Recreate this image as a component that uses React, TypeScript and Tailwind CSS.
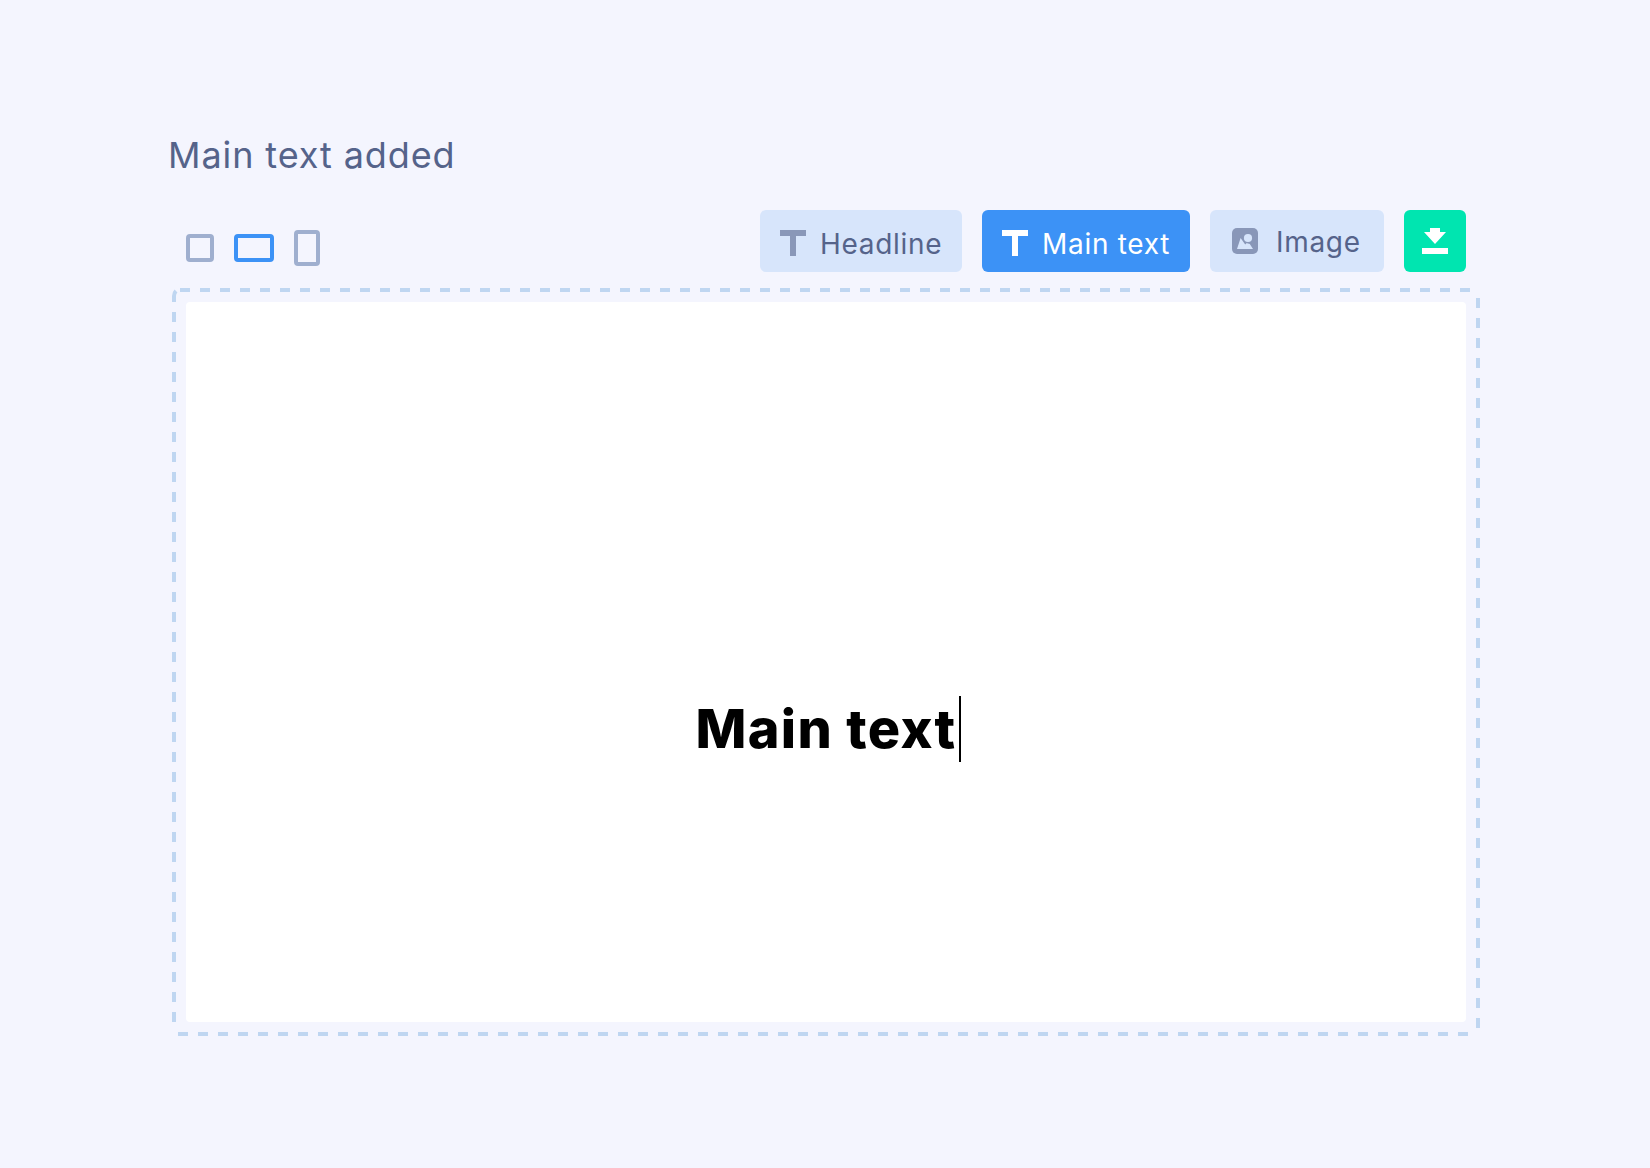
import { ReactNode, useState } from "react";

function TextIcon() {
  return (
    <svg className="block size-[26px]" viewBox="0 0 26 26" fill="currentColor" aria-hidden="true">
      <path d="M0 0h26v6H16v20h-6V6H0z" />
    </svg>
  );
}

function ImageIcon() {
  return (
    <svg className="block size-[26px]" viewBox="0 0 26 26" aria-hidden="true">
      <rect width="26" height="26" rx="5" fill="#8997b8" />
      <path d="M5 21 8.6 10l4.6 6.4 1.6-1.4 3 1L21 21z" fill="#d7e5fb" />
      <circle cx="16" cy="10" r="5.2" fill="#8997b8" />
      <circle cx="16" cy="10" r="4.1" fill="#d7e5fb" />
    </svg>
  );
}

function DownloadIcon() {
  return (
    <svg className="block size-[26px]" viewBox="0 0 26 26" fill="currentColor" aria-hidden="true">
      <path d="M8 0h10v4h6L13 16 2 4h6zM0 20h26v6H0z" />
    </svg>
  );
}

function DashedFrame() {
  return (
    <svg
      className="pointer-events-none absolute inset-0 size-full overflow-visible text-[#bfd6f1]"
      stroke="currentColor"
      strokeWidth="4"
      strokeDasharray="10 10"
      fill="none"
      aria-hidden="true"
    >
      <line x1="8" y1="2" x2="100%" y2="2" />
      <path d="M2 14V8Q2 5 4 3" strokeDasharray="none" />
      <svg x="0" y="24" width="100%" height="100%" overflow="visible">
        <line x1="2" y1="0" x2="2" y2="96%" />
      </svg>
      <svg x="100%" y="10" width="4" height="100%" overflow="visible">
        <line x1="-2" y1="0" x2="-2" y2="98%" />
      </svg>
      <svg x="0" y="100%" width="100%" height="4" overflow="visible">
        <line x1="6" y1="-2" x2="99.5%" y2="-2" />
      </svg>
    </svg>
  );
}

const formats = [
  { name: "Square", shape: "h-7 w-7" },
  { name: "Landscape", shape: "h-7 w-10" },
  { name: "Portrait", shape: "h-9 w-[26px]" },
];

function ToolButton({
  active = false,
  children,
  className,
  onClick,
}: {
  active?: boolean;
  children: ReactNode;
  className: string;
  onClick: () => void;
}) {
  return (
    <button
      type="button"
      aria-pressed={active}
      onClick={onClick}
      className={`flex h-[62px] rounded-md text-[28px] leading-8 tracking-wide ${
        active ? "bg-[#3c92f6] text-white" : "bg-[#d7e5fb] text-[#55638a]"
      } ${className}`}
    >
      {children}
    </button>
  );
}

export default function App() {
  const [format, setFormat] = useState("Landscape");
  const [tool, setTool] = useState("Main text");

  return (
    <main className="min-h-screen bg-[#f4f5fe] px-[168px] py-[132px] font-['Inter',sans-serif]">
      <h1 className="text-4xl leading-[46px] tracking-wide text-[#55638a]">Main text added</h1>

      <div className="mt-8 mr-4 ml-[18px] flex items-start justify-between">
        <div className="mt-5 flex items-center gap-5">
          {formats.map((f) => (
            <button
              key={f.name}
              type="button"
              aria-label={f.name}
              aria-pressed={format === f.name}
              onClick={() => setFormat(f.name)}
              className={`rounded-sm border-4 ${f.shape} ${
                format === f.name ? "border-[#3c92f6]" : "border-[#9fafcf]"
              }`}
            />
          ))}
        </div>

        <div className="flex gap-5">
          <ToolButton active={tool === "Headline"} onClick={() => setTool("Headline")} className="w-[202px] gap-[14px] px-5 pt-5">
            <span className={tool === "Headline" ? "text-white" : "text-[#8997b8]"}>
              <TextIcon />
            </span>
            <span className="-mt-0.5">Headline</span>
          </ToolButton>
          <ToolButton active={tool === "Main text"} onClick={() => setTool("Main text")} className="w-[208px] gap-[14px] px-5 pt-5">
            <span className={tool === "Main text" ? "text-white" : "text-[#8997b8]"}>
              <TextIcon />
            </span>
            <span className="-mt-0.5 whitespace-nowrap">Main text</span>
          </ToolButton>
          <ToolButton active={tool === "Image"} onClick={() => setTool("Image")} className="w-[174px] gap-[18px] px-[22px] pt-[18px]">
            <ImageIcon />
            <span className="-mt-0.5">Image</span>
          </ToolButton>
          <button
            type="button"
            aria-label="Download"
            className="flex size-[62px] items-center justify-center rounded-md bg-[#00e5b0] text-white"
          >
            <DownloadIcon />
          </button>
        </div>
      </div>

      <section className="relative mt-4 mr-0.5 ml-1 p-[14px]">
        <DashedFrame />
        <div className="flex aspect-video items-center justify-center rounded-sm bg-white pt-[134px] pl-1">
          <p className="flex h-[66px] items-center gap-0.5 text-[54px] leading-[64px] font-extrabold tracking-wide text-black">
            Main text
            <span className="h-full w-0.5 bg-black" />
          </p>
        </div>
      </section>
    </main>
  );
}
